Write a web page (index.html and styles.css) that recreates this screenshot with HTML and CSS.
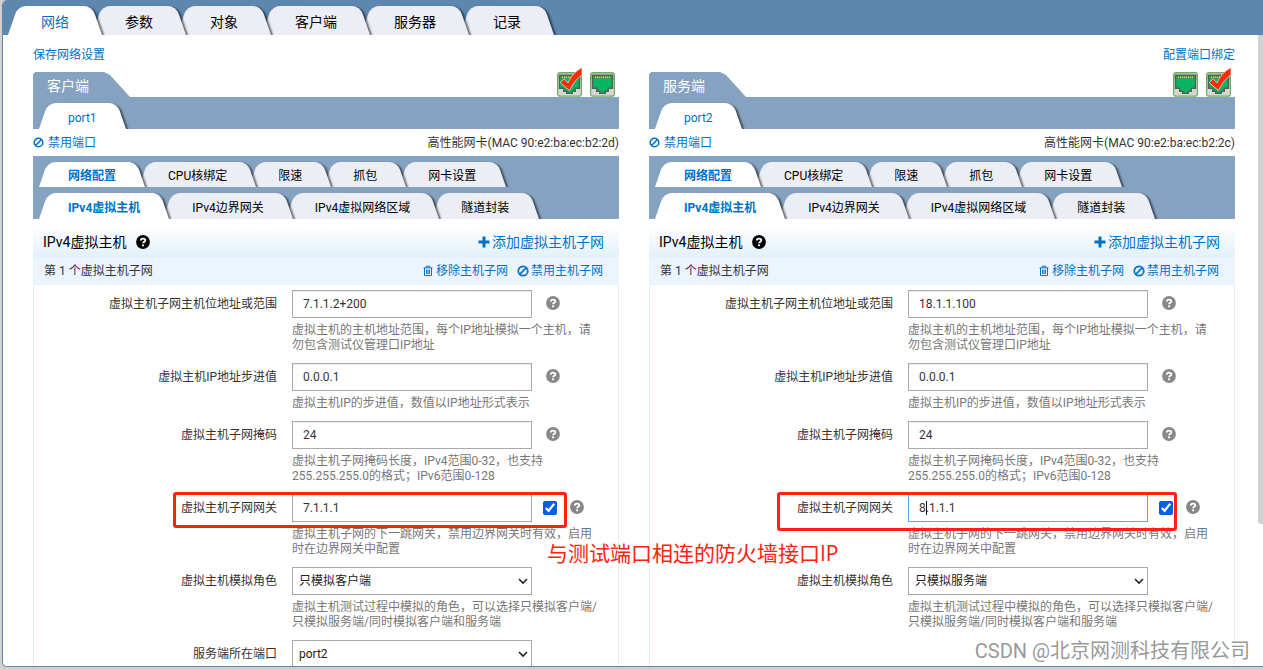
FILE: index.html
```
<!DOCTYPE html>
<html lang="zh-CN">
<head>
<meta charset="utf-8">
<title>网络</title>
<link rel="stylesheet" href="styles.css">
</head>
<body>
<svg class="symbols" aria-hidden="true">
  <symbol id="ban" viewBox="0 0 12 12"><circle cx="6" cy="6" r="4.700" fill="none" stroke="currentColor" stroke-width="1.700"/><path d="M2.800 9.200 9.200 2.800" stroke="currentColor" stroke-width="1.700"/></symbol>
  <symbol id="trash" viewBox="0 0 12 12"><path d="M1.500 2.800h9M4.200 2.500V1.200h3.600v1.300M2.500 3v7.600h7V3M4.600 4.500v4.600M6 4.500v4.600M7.400 4.500v4.600" fill="none" stroke="currentColor"/></symbol>
  <symbol id="plus" viewBox="0 0 12 12"><path d="M4.500.5h3v4h4v3h-4v4h-3v-4h-4v-3h4z" fill="currentColor"/></symbol>
  <symbol id="help" viewBox="0 0 14 14"><circle cx="7" cy="7" r="6.900" fill="currentColor"/><path d="M4.800 5.500C4.900 2.900 9.400 3 9.300 5.400 9.200 6.800 7.100 6.700 7.100 8.300" fill="none" stroke="#fff" stroke-width="1.900"/><path d="M6.100 9.400h2v1.800h-2z" fill="#fff"/></symbol>
  <symbol id="nic" viewBox="0 0 25 30">
    <rect x=".6" y="5.600" width="23.800" height="23.600" rx="2.500" fill="#d6d6d6" stroke="#74ad5a" stroke-width="1.200"/>
    <path d="M1.500 13V8q0-1.500 1.500-1.500h19q1.500 0 1.500 1.500v5z" fill="#8fa18f"/>
    <path d="M1.800 8h21.400v14h-4.200v3h-3v2H9v-2H6v-3H1.800z" fill="#4a6650"/>
    <path d="M3.300 9.500h18.400v11h-4.200v3h-3v2h-4v-2h-3v-3H3.300z" fill="#08b565"/>
    <path d="M3.300 9h18.400v2.500H3.300z" fill="#4c8a4c"/>
    <path d="M5 10.300h15" stroke="#dccb78" stroke-width="1.500" stroke-dasharray="1.200 .8"/>
  </symbol>
  <symbol id="nic-on" viewBox="0 0 25 30">
    <use href="#nic"/>
    <path d="M3 15.500 7.300 12l3.700 4C14 9 18.500 4 25 .5v7.500c-5 3-9 8.500-12.500 15.500z" fill="#ff2a08" stroke="#f6e5df" stroke-width=".7"/>
  </symbol>
</svg>

<div class="page">
  <nav class="tabs tabs-main">
    <button class="tab active">网络</button>
    <button class="tab">参数</button>
    <button class="tab">对象</button>
    <button class="tab">客户端</button>
    <button class="tab">服务器</button>
    <button class="tab">记录</button>
  </nav>

  <main class="content">
    <div class="actions">
      <a href="#">保存网络设置</a>
      <a href="#">配置端口绑定</a>
    </div>

    <div class="columns">
      <section class="side">
        <header class="side-head">
          <h2 class="side-title">客户端</h2>
          <div class="nics">
            <svg class="nic"><use href="#nic-on"/></svg>
            <svg class="nic"><use href="#nic"/></svg>
          </div>
        </header>
        <nav class="tabs tabs-port"><button class="tab active">port1</button></nav>
        <div class="port-line">
          <a class="icon-link" href="#"><svg class="icon"><use href="#ban"/></svg>禁用端口</a>
          <span>高性能网卡(MAC 90:e2:ba:ec:b2:2d)</span>
        </div>
        <nav class="tabs tabs-sub">
          <button class="tab active">网络配置</button>
          <button class="tab">CPU核绑定</button>
          <button class="tab">限速</button>
          <button class="tab">抓包</button>
          <button class="tab">网卡设置</button>
        </nav>
        <nav class="tabs tabs-sub">
          <button class="tab active">IPv4虚拟主机</button>
          <button class="tab">IPv4边界网关</button>
          <button class="tab">IPv4虚拟网络区域</button>
          <button class="tab">隧道封装</button>
        </nav>
        <div class="panel">
          <div class="panel-head">
            <h3>IPv4虚拟主机 <svg class="help-icon"><use href="#help"/></svg></h3>
            <a class="icon-link" href="#"><svg class="icon"><use href="#plus"/></svg>添加虚拟主机子网</a>
          </div>
          <div class="subnet-head">
            <span>第 1 个虚拟主机子网</span>
            <a class="icon-link" href="#"><svg class="icon"><use href="#trash"/></svg>移除主机子网</a>
            <a class="icon-link" href="#"><svg class="icon"><use href="#ban"/></svg>禁用主机子网</a>
          </div>
          <form class="form">
            <div class="row">
              <label for="c-range">虚拟主机子网主机位地址或范围</label>
              <div class="field">
                <div class="control"><input id="c-range" class="box" type="text" value="7.1.1.2+200"><svg class="help-icon"><use href="#help"/></svg></div>
                <p>虚拟主机的主机地址范围，每个IP地址模拟一个主机，请勿包含测试仪管理口IP地址</p>
              </div>
            </div>
            <div class="row">
              <label for="c-step">虚拟主机IP地址步进值</label>
              <div class="field">
                <div class="control"><input id="c-step" class="box" type="text" value="0.0.0.1"><svg class="help-icon"><use href="#help"/></svg></div>
                <p>虚拟主机IP的步进值，数值以IP地址形式表示</p>
              </div>
            </div>
            <div class="row">
              <label for="c-mask">虚拟主机子网掩码</label>
              <div class="field">
                <div class="control"><input id="c-mask" class="box" type="text" value="24"><svg class="help-icon"><use href="#help"/></svg></div>
                <p>虚拟主机子网掩码长度，IPv4范围0-32，也支持255.255.255.0的格式；IPv6范围0-128</p>
              </div>
            </div>
            <div class="row">
              <label for="c-gw">虚拟主机子网网关</label>
              <div class="field">
                <div class="control with-check"><input id="c-gw" class="box" type="text" value="7.1.1.1"><input class="check" type="checkbox" aria-label="启用子网网关" checked><svg class="help-icon"><use href="#help"/></svg></div>
                <p>虚拟主机子网的下一跳网关，禁用边界网关时有效，启用时在边界网关中配置</p>
              </div>
            </div>
            <div class="row">
              <label for="c-role">虚拟主机模拟角色</label>
              <div class="field">
                <div class="control"><select id="c-role" class="box"><option>只模拟客户端</option></select></div>
                <p>虚拟主机测试过程中模拟的角色，可以选择只模拟客户端/只模拟服务端/同时模拟客户端和服务端</p>
              </div>
            </div>
            <div class="row">
              <label for="c-port">服务端所在端口</label>
              <div class="field">
                <div class="control"><select id="c-port" class="box"><option>port2</option></select></div>
              </div>
            </div>
          </form>
        </div>
      </section>

      <section class="side">
        <header class="side-head">
          <h2 class="side-title">服务端</h2>
          <div class="nics">
            <svg class="nic"><use href="#nic"/></svg>
            <svg class="nic"><use href="#nic-on"/></svg>
          </div>
        </header>
        <nav class="tabs tabs-port"><button class="tab active">port2</button></nav>
        <div class="port-line">
          <a class="icon-link" href="#"><svg class="icon"><use href="#ban"/></svg>禁用端口</a>
          <span>高性能网卡(MAC 90:e2:ba:ec:b2:2c)</span>
        </div>
        <nav class="tabs tabs-sub">
          <button class="tab active">网络配置</button>
          <button class="tab">CPU核绑定</button>
          <button class="tab">限速</button>
          <button class="tab">抓包</button>
          <button class="tab">网卡设置</button>
        </nav>
        <nav class="tabs tabs-sub">
          <button class="tab active">IPv4虚拟主机</button>
          <button class="tab">IPv4边界网关</button>
          <button class="tab">IPv4虚拟网络区域</button>
          <button class="tab">隧道封装</button>
        </nav>
        <div class="panel">
          <div class="panel-head">
            <h3>IPv4虚拟主机 <svg class="help-icon"><use href="#help"/></svg></h3>
            <a class="icon-link" href="#"><svg class="icon"><use href="#plus"/></svg>添加虚拟主机子网</a>
          </div>
          <div class="subnet-head">
            <span>第 1 个虚拟主机子网</span>
            <a class="icon-link" href="#"><svg class="icon"><use href="#trash"/></svg>移除主机子网</a>
            <a class="icon-link" href="#"><svg class="icon"><use href="#ban"/></svg>禁用主机子网</a>
          </div>
          <form class="form">
            <div class="row">
              <label for="s-range">虚拟主机子网主机位地址或范围</label>
              <div class="field">
                <div class="control"><input id="s-range" class="box" type="text" value="18.1.1.100"><svg class="help-icon"><use href="#help"/></svg></div>
                <p>虚拟主机的主机地址范围，每个IP地址模拟一个主机，请勿包含测试仪管理口IP地址</p>
              </div>
            </div>
            <div class="row">
              <label for="s-step">虚拟主机IP地址步进值</label>
              <div class="field">
                <div class="control"><input id="s-step" class="box" type="text" value="0.0.0.1"><svg class="help-icon"><use href="#help"/></svg></div>
                <p>虚拟主机IP的步进值，数值以IP地址形式表示</p>
              </div>
            </div>
            <div class="row">
              <label for="s-mask">虚拟主机子网掩码</label>
              <div class="field">
                <div class="control"><input id="s-mask" class="box" type="text" value="24"><svg class="help-icon"><use href="#help"/></svg></div>
                <p>虚拟主机子网掩码长度，IPv4范围0-32，也支持255.255.255.0的格式；IPv6范围0-128</p>
              </div>
            </div>
            <div class="row">
              <label for="s-gw">虚拟主机子网网关</label>
              <div class="field">
                <div class="control with-check editing"><input id="s-gw" class="box" type="text" value="8.1.1.1"><input class="check" type="checkbox" aria-label="启用子网网关" checked><svg class="help-icon"><use href="#help"/></svg></div>
                <p>虚拟主机子网的下一跳网关，禁用边界网关时有效，启用时在边界网关中配置</p>
              </div>
            </div>
            <div class="row">
              <label for="s-role">虚拟主机模拟角色</label>
              <div class="field">
                <div class="control"><select id="s-role" class="box"><option>只模拟服务端</option></select></div>
                <p>虚拟主机测试过程中模拟的角色，可以选择只模拟客户端/只模拟服务端/同时模拟客户端和服务端</p>
              </div>
            </div>
          </form>
        </div>
      </section>
    </div>
  </main>
  <div class="scroll-thumb"></div>
</div>

<div class="mark mark-client"></div>
<div class="mark mark-server"></div>
<div class="note">与测试端口相连的防火墙接口IP</div>
<div class="watermark">CSDN @北京网测科技有限公司</div>
</body>
</html>
```

FILE: styles.css
```
* { box-sizing: border-box; }

body {
  margin: 0;
  height: 100vh;
  padding: 0 0 2px 2px;
  overflow: hidden;
  position: relative;
  background: #d0d0d0;
  color: #333;
  font: 12px/16px Roboto, "Noto Sans CJK SC", sans-serif;
}

a { color: #0072c6; text-decoration: none; }
h2, h3, p { margin: 0; font-weight: 400; }
button, input, select { font: inherit; margin: 0; }
.symbols { position: absolute; width: 0; height: 0; }

.page {
  height: 100%;
  position: relative;
  overflow: hidden;
  background: #fff;
  border: 1px solid #5d87af;
  border-width: 0 0 1px 1px;
  border-radius: 5px 0 0 5px;
}

/* Slanted tabs: each half of a tab is a skewed pseudo-element */
.tabs {
  display: flex;
  overflow: hidden;
  background: #86a2c1;
}
.tab {
  position: relative;
  isolation: isolate;
  flex: none;
  height: 26px;
  padding: 3px 29px 0;
  margin-right: -7px;
  border: 0;
  background: none;
  color: #000;
  white-space: nowrap;
}
.tab::before, .tab::after {
  content: "";
  position: absolute;
  z-index: -1;
  top: 0;
  bottom: 0;
  width: 60%;
  background: #ebeef4;
}
.tab::before {
  left: 0;
  border-top-left-radius: 8px;
  transform: skewX(-19deg);
  transform-origin: 0 100%;
}
.tab::after {
  right: 0;
  border-top-right-radius: 8px;
  transform: skewX(19deg);
  transform-origin: 100% 100%;
  box-shadow: 2px 1px 2px rgba(0, 0, 0, .55);
}
.tab:nth-child(1) { z-index: 6; }
.tab:nth-child(2) { z-index: 5; }
.tab:nth-child(3) { z-index: 4; }
.tab:nth-child(4) { z-index: 3; }
.tab:nth-child(5) { z-index: 2; }
.tab:nth-child(6) { z-index: 1; }
.tab.active { color: #0072c6; }
.tab.active::before, .tab.active::after { background: #fff; }

.tabs-main { padding: 6px 5px 0; background: #5d87af; }
.tabs-main .tab {
  height: 29px;
  padding: 2px 33px 0;
  margin-right: -9px;
  font-size: 14px;
}
.tabs-main .active { margin-right: -10px; }
.tabs-port { padding: 6px 6px 0; }
.tabs-sub { padding: 6px 6px 0; }
.tabs-sub .active { margin-right: -6px; font-weight: 700; }
.tabs-sub + .panel { margin-top: 10px; }
.port-line + .tabs-sub .tab { height: 25px; }

.content {
  display: flex;
  flex-direction: column;
  height: calc(100% - 35px);
  padding: 12px 28px 0 30px;
}
.actions { display: flex; justify-content: space-between; }
.columns {
  flex: 1 0 auto;
  display: grid;
  grid-template-columns: 1fr 1fr;
  gap: 30px;
  padding-top: 9px;
}
.side, .panel { display: flex; flex-direction: column; }
.panel, .form { flex: 1 0 auto; }

.side-head { display: flex; justify-content: space-between; height: 25px; }
.side-title {
  padding: 2px 41px 0 14px;
  border-top-left-radius: 3px;
  background: #86a2c1;
  clip-path: polygon(0 2px, 2px 0, calc(100% - 26px) 0, calc(100% - 20px) 3px, 100% 100%, 0 100%);
  color: #fff;
  font-size: 14px;
  line-height: 24px;
}
.nics { display: flex; align-items: flex-end; gap: 8px; padding-right: 4px; }
.nic { width: 25px; height: 30px; }

.port-line { display: flex; justify-content: space-between; align-items: center; height: 27px; }
.icon-link { display: inline-flex; align-items: center; gap: 2px; }
.icon { width: 12px; height: 12px; }
.port-line .icon-link { gap: 4px; }
.port-line .icon { width: 11px; height: 11px; }

.panel-head {
  display: flex;
  align-items: center;
  justify-content: space-between;
  height: 28px;
  padding: 0 15px 2px 10px;
  background: linear-gradient(#fcfdff, #e2f1f9);
  font-size: 14px;
}
.panel-head h3 { display: flex; align-items: center; gap: 10px; color: #000; font-size: 14px; }
.panel-head .help-icon { color: #000; }
.help-icon { width: 14px; height: 14px; color: #888; flex: none; }
.subnet-head {
  display: flex;
  align-items: center;
  gap: 9px;
  height: 28px;
  padding: 0 16px 0 11px;
  background: #ebf4ff;
}
.subnet-head span { margin-right: auto; }

.form {
  display: flex;
  flex-direction: column;
  gap: 11px;
  padding: 5px 15px 0 0;
  border: 1px solid #e2eef8;
  border-width: 0 1px;
}
.row { display: flex; gap: 15px; }
.row label { width: 243px; flex: none; text-align: right; line-height: 28px; }
.field { flex: 1; max-width: 308px; }
.control { position: relative; display: flex; align-items: center; gap: 14px; }
.control .help-icon { margin-bottom: 2px; }
.field p { padding-top: 5px; margin-bottom: -1px; color: #777; line-height: 15px; }
.box {
  width: 240px;
  height: 28px;
  padding: 0 10px;
  border: 1px solid #aaa;
  border-radius: 0;
  background: #fff;
  color: #333;
  outline: 0;
}
input.box { box-shadow: inset 0 1px 1px rgba(0, 0, 0, .08); }
select.box {
  appearance: none;
  padding: 0 6px;
  color: #222;
  background: #fff url("data:image/svg+xml,%3Csvg xmlns='http://www.w3.org/2000/svg' width='10' height='8'%3E%3Cpath d='M1 2l4 4 4-4' fill='none' stroke='%23222' stroke-width='1.600'/%3E%3C/svg%3E") no-repeat right 3px center;
}
.with-check { gap: 11px; }
.check { width: 14px; height: 14px; accent-color: #0060df; }
.check + .help-icon { margin-left: 2px; }
.editing .box { border-color: #66a6dc; }
.editing::after {
  content: "";
  position: absolute;
  left: 18px;
  top: 7px;
  width: 1px;
  height: 14px;
  background: #000;
}

.scroll-thumb {
  position: absolute;
  top: 35px;
  right: 0;
  width: 5px;
  height: 489px;
  border-radius: 0 0 0 3px;
  background: #d2d2d2;
}

/* Annotations drawn over the page */
.mark { position: absolute; top: 492px; border: 3px solid #ff2212; border-radius: 3px; }
.mark-client { left: 173px; width: 394px; height: 36px; }
.mark-server { left: 777px; width: 400px; height: 39px; }
.note {
  position: absolute;
  left: 547px;
  top: 539px;
  color: #ff2212;
  font: 21px/28px "Open Sans", "Noto Sans CJK SC", sans-serif;
  white-space: nowrap;
}
.watermark {
  position: absolute;
  right: 13px;
  bottom: 4px;
  color: #999;
  text-shadow: 1px 1px 0 #fff;
  font: 20px/28px Roboto, "Noto Sans CJK SC", sans-serif;
  white-space: nowrap;
}
```
